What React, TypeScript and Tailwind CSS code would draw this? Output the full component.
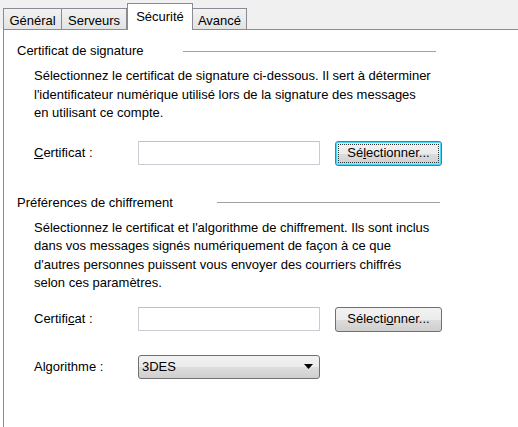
import React from 'react';

const font = { fontFamily: '"Liberation Sans", Arial, sans-serif' };

function Tab({ label, active, className = '' }: { label: string; active?: boolean; className?: string }) {
  if (active) {
    return (
      <div className={`relative z-10 -mb-px h-[27px] self-end border border-b-0 border-[#898c95] bg-white pt-[3px] text-center text-[13px] text-black ${className}`}>
        {label}
      </div>
    );
  }
  return (
    <div className={`h-[21px] self-end border border-b-0 border-[#898c95] bg-gradient-to-b from-[#f2f2f2] to-[#e3e3e3] pt-[2px] text-center text-[13px] text-black ${className}`}>
      {label}
    </div>
  );
}

function Button({ children, focused }: { children: React.ReactNode; focused?: boolean }) {
  return (
    <div
      className={`flex h-[25px] w-[107px] items-center justify-center rounded-[3px] border text-[13px] text-black ${
        focused ? 'border-[#3c7fb1] p-[2px] shadow-[inset_0_0_0_1px_#48d8fb]' : 'border-[#707070]'
      } bg-[linear-gradient(#f2f2f2_0%,#ebebeb_50%,#dddddd_51%,#cfcfcf_100%)]`}
    >
      {focused ? (
        <span className="flex h-full w-full items-center justify-center border border-dotted border-[#333]">{children}</span>
      ) : (
        <span>{children}</span>
      )}
    </div>
  );
}

function Input() {
  return <div className="h-[24px] w-[182px] border border-[#c9ccd2] border-t-[#bfc3c9] bg-white" />;
}

export default function App() {
  return (
    <div className="h-[427px] w-[518px] overflow-hidden bg-white" style={font}>
      <div className="flex h-[29px] items-end bg-[#f0f0f0] pl-[3px]">
        <Tab label="Général" className="w-[59px]" />
        <Tab label="Serveurs" className="w-[65px] border-l-0" />
        <Tab label="Sécurité" active className="w-[66px]" />
        <Tab label="Avancé" className="w-[54px] border-l-0" />
      </div>
      <div className="ml-[3px] h-[398px] border-l border-t border-[#898c95] pt-[12px] text-[13px] text-black">
        <div className="flex h-[18px] items-center pl-[13px]">
          <span className="w-[166px]">Certificat de signature</span>
          <div className="h-px w-[253px] bg-[#a0a0a0]" />
        </div>
        <p className="mt-[7px] pl-[30px] leading-[18.5px]">
          Sélectionnez le certificat de signature ci-dessous. Il sert à déterminer
          <br />
          l'identificateur numérique utilisé lors de la signature des messages
          <br />
          en utilisant ce compte.
        </p>
        <div className="mt-[18px] flex items-center pl-[30px]">
          <span className="w-[104px]">
            <u>C</u>ertificat :
          </span>
          <Input />
          <div className="ml-[15px]">
            <Button focused>
              Sé<u>l</u>ectionner...
            </Button>
          </div>
        </div>
        <div className="mt-[28px] flex h-[18px] items-center pl-[13px]">
          <span className="w-[200px]">Préférences de chiffrement</span>
          <div className="h-px w-[223px] bg-[#a0a0a0]" />
        </div>
        <p className="mt-[7px] pl-[30px] leading-[18.5px]">
          Sélectionnez le certificat et l'algorithme de chiffrement. Ils sont inclus
          <br />
          dans vos messages signés numériquement de façon à ce que
          <br />
          d'autres personnes puissent vous envoyer des courriers chiffrés
          <br />
          selon ces paramètres.
        </p>
        <div className="mt-[14px] flex items-center pl-[30px]">
          <span className="w-[104px]">
            Certifi<u>c</u>at :
          </span>
          <Input />
          <div className="ml-[15px]">
            <Button>
              Sélecti<u>o</u>nner...
            </Button>
          </div>
        </div>
        <div className="mt-[23px] flex items-center pl-[30px]">
          <span className="w-[104px]">Algorithme :</span>
          <div className="flex h-[24px] w-[182px] items-center justify-between rounded-[3px] border border-[#707070] bg-[linear-gradient(#f2f2f2_0%,#ebebeb_50%,#dddddd_51%,#cfcfcf_100%)] pl-[3px] pr-[6px]">
            <span>3DES</span>
            <svg width="9" height="5" viewBox="0 0 9 5">
              <path d="M0 0h9L4.5 5z" fill="#000" />
            </svg>
          </div>
        </div>
      </div>
    </div>
  );
}
